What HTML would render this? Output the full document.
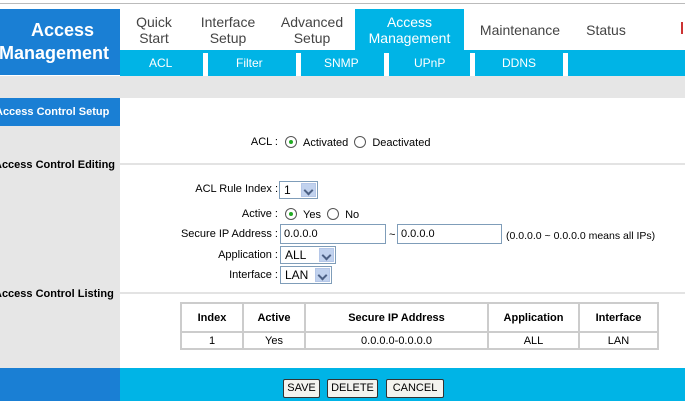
<!DOCTYPE html>
<html><head><style>
*{margin:0;padding:0;box-sizing:border-box}
body{width:685px;height:401px;overflow:hidden;background:#fff;font-family:"Liberation Sans",Arial,sans-serif;font-size:11px;color:#000;position:relative}
.a{position:absolute;white-space:nowrap}
.tab{position:absolute;top:9px;height:41px;color:#444;font-size:14px;text-align:center;line-height:16px;display:flex;align-items:center;justify-content:center}
.sub{position:absolute;top:56px;color:#fff;font-size:12px}
.sep{position:absolute;top:53px;width:5px;height:23px;background:#fff}
.lbl{position:absolute;text-align:right;right:407px;white-space:nowrap}
.radio{display:inline-block;width:12px;height:12px;border:1px solid #555;border-radius:50%;vertical-align:-2px;background:#fff;position:relative;margin:0 4px 0 0}
.radio.on:after{content:"";position:absolute;left:3px;top:3px;width:4px;height:4px;border-radius:50%;background:#2a2}
.sel{position:absolute;height:18px;border:1px solid #7f9db9;background:#fff;padding-left:4px;line-height:16px;font-size:12px}
.sel i{position:absolute;right:1px;top:1px;width:15px;height:14px;background:#c1d2ee;border:1px solid #b5c7e8}
.sel i:after{content:"";position:absolute;left:3px;top:3px;width:5px;height:5px;border-right:2px solid #4d6185;border-bottom:2px solid #4d6185;transform:rotate(45deg)}
.inp{position:absolute;height:20px;border:1px solid #7f9db9;background:#fff;padding-left:3px;line-height:18px}
table{position:absolute;left:180px;top:302px;width:479px;border-collapse:collapse}
td{border:2px solid #ccc;text-align:center;font-size:11px}
.btn{position:absolute;top:379px;height:19px;background:#f3f3ef;border:1px solid #333;border-radius:2px;font-size:11px;text-align:center;line-height:17px}
</style></head><body>
<div class="a" style="left:0;top:3px;width:685px;height:1px;background:#bbb"></div>
<div class="a" style="left:0;top:9px;width:120px;height:66px;background:#1a7fd4;color:#fff;font-weight:bold;font-size:18px;line-height:23px;text-align:center;padding-top:10px;overflow:hidden">&nbsp;Access<br><span style="margin-left:-12px">Management</span></div>
<div class="tab" style="left:125px;width:58px">Quick<br>Start</div>
<div class="tab" style="left:190px;width:76px">Interface<br>Setup</div>
<div class="tab" style="left:272px;width:80px">Advanced<br>Setup</div>
<div class="tab" style="left:355px;width:109px;background:#00b4e6;color:#fff">Access<br>Management</div>
<div class="tab" style="left:470px;width:100px">Maintenance</div>
<div class="tab" style="left:578px;width:56px">Status</div>
<div class="a" style="left:681px;top:22px;width:2px;height:12px;background:#c33"></div>
<div class="a" style="left:120px;top:50px;width:565px;height:26px;background:#00b4e6"></div>
<div class="sub" style="left:149px">ACL</div>
<div class="sub" style="left:236px">Filter</div>
<div class="sub" style="left:324px">SNMP</div>
<div class="sub" style="left:414px">UPnP</div>
<div class="sub" style="left:502px">DDNS</div>
<div class="sep" style="left:203px"></div>
<div class="sep" style="left:296px"></div>
<div class="sep" style="left:384px"></div>
<div class="sep" style="left:470px"></div>
<div class="sep" style="left:563px"></div>
<div class="a" style="left:0;top:76px;width:685px;height:22px;background:#e6e6e6"></div>
<div class="a" style="left:0;top:98px;width:120px;height:270px;background:#e6e6e6"></div>
<div class="a" style="left:0;top:98px;width:120px;height:28px;background:#1a7fd4;color:#fff;font-weight:bold;line-height:28px;text-indent:-5px">Access Control Setup</div>
<div class="a" style="left:-6px;top:159px;font-weight:bold">Access Control Editing</div>
<div class="a" style="left:-6px;top:288px;font-weight:bold">Access Control Listing</div>
<div class="a" style="left:120px;top:163px;width:565px;height:2px;background:#e3e3e3"></div>
<div class="a" style="left:120px;top:292px;width:565px;height:2px;background:#e3e3e3"></div>

<div class="lbl" style="top:136px">ACL :</div>
<div class="a" style="left:285px;top:136px"><span class="radio on" style="margin-right:6px"></span>Activated&nbsp; <span class="radio" style="margin-right:6px"></span>Deactivated</div>

<div class="lbl" style="top:183px">ACL Rule Index :</div>
<div class="sel" style="left:279px;top:181px;width:39px">1<i></i></div>
<div class="lbl" style="top:208px">Active :</div>
<div class="a" style="left:285px;top:208px"><span class="radio on" style="margin-right:6px"></span>Yes&nbsp; <span class="radio" style="margin-right:6px"></span>No</div>
<div class="lbl" style="top:228px">Secure IP Address :</div>
<div class="inp" style="left:280px;top:224px;width:106px">0.0.0.0</div>
<div class="a" style="left:389px;top:229px">~</div>
<div class="inp" style="left:397px;top:224px;width:105px">0.0.0.0</div>
<div class="a" style="left:506px;top:230px;font-size:10.5px">(0.0.0.0 ~ 0.0.0.0 means all IPs)</div>
<div class="lbl" style="top:249px">Application :</div>
<div class="sel" style="left:280px;top:246px;width:56px">ALL<i></i></div>
<div class="lbl" style="top:269px">Interface :</div>
<div class="sel" style="left:280px;top:266px;width:52px">LAN<i></i></div>

<table>
<tr style="height:29px"><td style="width:62px;font-weight:bold">Index</td><td style="width:62px;font-weight:bold">Active</td><td style="width:183px;font-weight:bold">Secure IP Address</td><td style="width:91px;font-weight:bold">Application</td><td style="font-weight:bold">Interface</td></tr>
<tr style="height:17px"><td>1</td><td>Yes</td><td>0.0.0.0-0.0.0.0</td><td>ALL</td><td>LAN</td></tr>
</table>

<div class="a" style="left:0;top:368px;width:120px;height:33px;background:#1a7fd4"></div>
<div class="a" style="left:120px;top:368px;width:565px;height:33px;background:#00b4e6"></div>
<div class="btn" style="left:283px;width:37px">SAVE</div>
<div class="btn" style="left:327px;width:51px">DELETE</div>
<div class="btn" style="left:386px;width:58px">CANCEL</div>
</body></html>
